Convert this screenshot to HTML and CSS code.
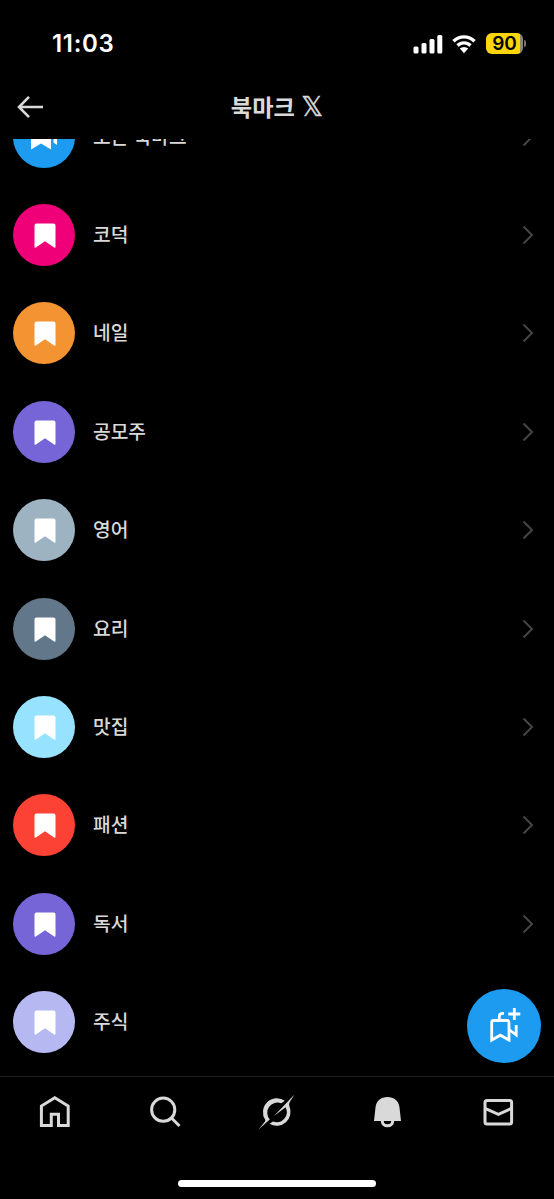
FILE: index.html
```
<!doctype html>
<html lang="ko">
<head>
    <meta charset="utf-8">
    <title>북마크</title>
    <meta name="viewport" content="width=device-width, initial-scale=1">
    <link rel="stylesheet" href="styles.css">
</head>

<body>
<!-- shared icons -->
<svg class="sprite" aria-hidden="true">
    <symbol id="bookmark" viewBox="0 0 22 26">
        <path d="M.5 2.500Q.5.500 2.500.500h17q2 0 2 2v21.300q0 1.700-1.400.700L11 18.200 1.900 24.500Q.5 25.500.5 23.800z"/>
    </symbol>
    <symbol id="chevron" viewBox="0 0 12 20">
        <path d="M1.500 1.500 10 10l-8.500 8.500"/>
    </symbol>
</svg>

<div class="screen">
    <div class="status-bar">
        <span class="time">11:03</span>
        <div class="status-icons">
            <svg class="signal" width="30" height="20" viewBox="0 0 30 20">
                <rect x=".5" y="12.500" width="5" height="7" rx="1.500"/>
                <rect x="8.500" y="9" width="5" height="10.500" rx="1.500"/>
                <rect x="16.500" y="5" width="5" height="14.500" rx="1.500"/>
                <rect x="24.300" y="1" width="5" height="18.500" rx="1.500"/>
            </svg>
            <svg class="wifi" width="26" height="20" viewBox="0 0 26 20">
                <path d="M2.500 7.200a15 15 0 0 1 21 0M6.500 11.500a9.300 9.300 0 0 1 13 0"/>
                <path class="dot" d="M8.800 14.600a6 6 0 0 1 8.400 0L13 19.200z"/>
            </svg>
            <div class="battery"><span>90</span></div>
            <div class="battery-cap"></div>
        </div>
    </div>

    <header class="header">
        <svg class="back" width="28" height="24" viewBox="0 0 28 24">
            <path d="M13 1.800 3 12l10 10.200M3 12h24"/>
        </svg>
        <h1 class="title">북마크 <span class="x-mark">𝕏</span></h1>
    </header>

    <main class="folders">
        <ul class="folder-list">
            <li class="folder">
                <div class="avatar blue">
                    <svg width="32" height="30" viewBox="0 0 32 30">
                        <path d="M3 5q0-2 2-2h15q3 0 3 2v22.500l-10-6L3 27.500z"/>
                        <path d="M25.500 2q3.500 0 3.500 3v18l-3.500-2.500z"/>
                    </svg>
                </div>
                <span class="name">모든 북마크</span>
                <svg class="chevron"><use href="#chevron"/></svg>
            </li>
            <li class="folder">
                <div class="avatar pink"><svg class="bookmark"><use href="#bookmark"/></svg></div>
                <span class="name">코덕</span>
                <svg class="chevron"><use href="#chevron"/></svg>
            </li>
            <li class="folder">
                <div class="avatar orange"><svg class="bookmark"><use href="#bookmark"/></svg></div>
                <span class="name">네일</span>
                <svg class="chevron"><use href="#chevron"/></svg>
            </li>
            <li class="folder">
                <div class="avatar purple"><svg class="bookmark"><use href="#bookmark"/></svg></div>
                <span class="name">공모주</span>
                <svg class="chevron"><use href="#chevron"/></svg>
            </li>
            <li class="folder">
                <div class="avatar silver"><svg class="bookmark"><use href="#bookmark"/></svg></div>
                <span class="name">영어</span>
                <svg class="chevron"><use href="#chevron"/></svg>
            </li>
            <li class="folder">
                <div class="avatar slate"><svg class="bookmark"><use href="#bookmark"/></svg></div>
                <span class="name">요리</span>
                <svg class="chevron"><use href="#chevron"/></svg>
            </li>
            <li class="folder">
                <div class="avatar sky"><svg class="bookmark"><use href="#bookmark"/></svg></div>
                <span class="name">맛집</span>
                <svg class="chevron"><use href="#chevron"/></svg>
            </li>
            <li class="folder">
                <div class="avatar red"><svg class="bookmark"><use href="#bookmark"/></svg></div>
                <span class="name">패션</span>
                <svg class="chevron"><use href="#chevron"/></svg>
            </li>
            <li class="folder">
                <div class="avatar purple"><svg class="bookmark"><use href="#bookmark"/></svg></div>
                <span class="name">독서</span>
                <svg class="chevron"><use href="#chevron"/></svg>
            </li>
            <li class="folder">
                <div class="avatar lavender"><svg class="bookmark"><use href="#bookmark"/></svg></div>
                <span class="name">주식</span>
            </li>
        </ul>
    </main>

    <!-- new folder button -->
    <button class="fab">
        <svg width="74" height="74" viewBox="0 0 74 74">
            <path d="M24.700 33.500q0-2 2-2h13.300q2 0 2 2V51l-8.700-4.800-8.600 4.800z"/>
            <path d="M32.300 31v-3.500q0-3.200 3.200-3.200h1.500M42 40.500l7.200 5.500V36"/>
            <path d="M47.300 19v12M41.300 25h12"/>
        </svg>
    </button>

    <nav class="tabs">
        <svg width="36" height="36" viewBox="0 0 36 36">
            <path d="M17.800 3.700 31.200 12v19.500h-9.700V20.300h-7.200v11.200H4.400V12z"/>
        </svg>
        <svg width="36" height="36" viewBox="0 0 36 36">
            <circle cx="15.200" cy="15.700" r="11.600"/>
            <path d="m23.500 24 8 8"/>
        </svg>
        <svg class="solid" width="36" height="36" viewBox="0 0 36 36">
            <path d="M25.800 6.800A13.900 13.900 0 0 0 6.200 25.800Q6.600 26.800 5.800 27.800L-.5 35.500 10.800 25.500A10.200 10.200 0 0 1 22.300 9.300z"/>
            <path d="M35.500.5 15 22 26.600 13.200A10.200 10.200 0 0 1 14 27.500L10.500 29.700A13.900 13.900 0 0 0 30.300 12Q29.700 10 30.600 8.300z"/>
        </svg>
        <svg class="solid" width="36" height="36" viewBox="0 0 36 36">
            <path d="M4 27 5.500 13.500C6.200 7 11 3.100 17.500 3.100S28.800 7 29.500 13.500L31 27z"/>
            <path class="clapper" d="M12.300 27c0 3.100 2.400 4.800 5.200 4.800s5.200-1.700 5.200-4.800"/>
        </svg>
        <svg width="36" height="36" viewBox="0 0 36 36">
            <rect x="4" y="6.500" width="26.600" height="23.500" rx="2"/>
            <path d="M4 14.300 17.400 20.300l13.200-6"/>
        </svg>
    </nav>
    <div class="home-indicator"></div>
</div>
</body>
</html>
```
FILE: styles.css
```
* {
    box-sizing: border-box;
}

body {
    margin: 0;
    background: #000;
    color: #d9d9d9;
    font-family: "Noto Sans CJK KR", sans-serif;
}

svg {
    display: block;
    flex: none;
    overflow: visible;
}

.sprite {
    width: 0;
    height: 0;
    position: absolute;
}

.screen {
    position: relative;
    display: flex;
    flex-direction: column;
    height: 1199px;
    overflow: hidden;
}

/* status bar */
.status-bar {
    display: flex;
    justify-content: space-between;
    align-items: center;
    height: 74px;
    padding: 13px 28px 0 52px;
}

.time {
    color: #fff;
    font: 600 24px/30px Inter, sans-serif;
    letter-spacing: .7px;
    padding-top: 1px;
}

.status-icons {
    display: flex;
    align-items: center;
}

.signal {
    fill: #fff;
}

.wifi {
    margin: 0 9px 0 8px;
    fill: none;
    stroke: #fff;
    stroke-width: 3.4;
}

.wifi .dot {
    fill: #fff;
    stroke: none;
}

.battery {
    width: 37px;
    height: 21px;
    border-radius: 6px;
    background: linear-gradient(90deg, #fdd60a 34px, #8b8571 34px);
    color: #000;
    font: 600 19px/21px Inter, sans-serif;
    text-align: center;
}

.battery-cap {
    width: 2px;
    height: 7px;
    margin-left: 1px;
    border-radius: 0 3px 3px 0;
    background: #77736a;
}

/* header */
.header {
    display: flex;
    align-items: center;
    height: 65px;
    padding: 0 16px;
}

.back {
    fill: none;
    stroke: #d9d9d9;
    stroke-width: 2.6;
}

.title {
    flex: 1;
    margin: 0 28px 2px 0;
    text-align: center;
    font-size: 23.2px;
    line-height: 32px;
    font-weight: 700;
}

.x-mark {
    display: inline-block;
    font-family: "DejaVu Sans", sans-serif;
    font-size: 27px;
    line-height: 20px;
    font-weight: 400;
    -webkit-text-stroke: .5px #d9d9d9;
}

/* folder list, scrolled a bit under the header */
.folders {
    height: 937px;
    overflow: hidden;
}

.folder-list {
    margin: -51.6px 0 0;
    padding: 0;
    list-style: none;
}

.folder {
    display: flex;
    align-items: center;
    height: 98.4px;
    padding: 0 20px 0 13px;
}

.avatar {
    display: flex;
    align-items: center;
    justify-content: center;
    width: 62px;
    height: 62px;
    margin-right: 18px;
    border-radius: 50%;
    fill: #fff;
}

.bookmark {
    width: 22px;
    height: 26px;
    margin: 2px 0 0 1px;
}

.name {
    flex: 1;
    padding-bottom: 2px;
    font-size: 19.2px;
    line-height: 28px;
    font-weight: 500;
}

.chevron {
    width: 12px;
    height: 20px;
    fill: none;
    stroke: #454545;
    stroke-width: 2;
}

.blue { background: #1d9bf0; }
.pink { background: #ef0078; }
.orange { background: #f39331; }
.purple { background: #7565d6; }
.silver { background: #9db3c2; }
.slate { background: #627789; }
.sky { background: #97e3ff; }
.red { background: #fc4234; }
.lavender { background: #b6b8f2; }

.fab {
    position: absolute;
    right: 13px;
    bottom: 136px;
    width: 74px;
    height: 74px;
    padding: 0;
    border: 0;
    border-radius: 50%;
    background: #1d9bf0;
}

.fab svg {
    fill: none;
    stroke: #fff;
    stroke-width: 2.8;
}

/* bottom tabs */
.tabs {
    display: grid;
    grid-template-columns: repeat(5, 1fr);
    justify-items: center;
    height: 104px;
    padding-top: 17px;
    border-top: 1px solid #1f1f1f;
}

.tabs svg {
    fill: none;
    stroke: #d9d9d9;
    stroke-width: 3;
}

.tabs .solid {
    fill: #d9d9d9;
    stroke: none;
}

.tabs .clapper {
    fill: none;
    stroke: #d9d9d9;
    stroke-width: 3;
}

.home-indicator {
    width: 198px;
    height: 7px;
    margin: 0 auto;
    border-radius: 4px;
    background: #fff;
}
```
